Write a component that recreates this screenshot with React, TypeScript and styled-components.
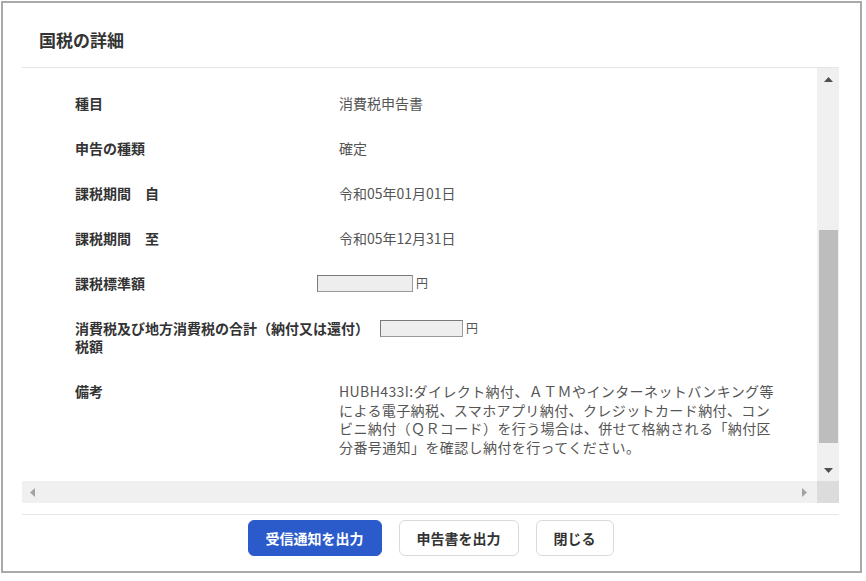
import styled, { createGlobalStyle } from "styled-components";

const GlobalStyle = createGlobalStyle`
  html, body {
    margin: 0;
    padding: 0;
    background: #ffffff;
  }
  body {
    font-family: "Noto Sans CJK JP", "Noto Sans", sans-serif;
    color: #333333;
  }
`;

const Page = styled.div`
  width: 866px;
  height: 581px;
  padding: 1px 0 0 1px;
  box-sizing: border-box;
`;

const Modal = styled.div`
  width: 861px;
  box-sizing: border-box;
  border: 2px solid #a9a9a9;
  background: #ffffff;
  display: flex;
  flex-direction: column;
`;

const Header = styled.div`
  margin: 0 21px 0 19px;
  padding: 24px 0 14px 17px;
  border-bottom: 1px solid #e6e6e6;
`;

const Title = styled.h2`
  margin: 0;
  font-size: 17px;
  line-height: 26px;
  font-weight: 700;
  color: #333333;
`;

const ScrollBox = styled.div`
  margin: 0 21px 0 19px;
  display: grid;
  grid-template-columns: 1fr 22px;
  grid-template-rows: 413px 22px;
`;

const Content = styled.div`
  overflow: hidden;
  padding-top: 13px;
`;

const Row = styled.div<{ $top?: boolean }>`
  display: flex;
  align-items: ${(p) => (p.$top ? "flex-start" : "center")};
  padding: 13px 0 14px 53px;
  font-size: 14px;
  line-height: 18px;
`;

const Label = styled.div<{ $w?: number }>`
  width: ${(p) => p.$w ?? 264}px;
  flex: none;
  font-weight: 700;
  color: #333333;
`;

const Value = styled.div`
  color: #555555;
`;

const Remark = styled.div`
  width: 440px;
  color: #555555;
  line-height: 18.7px;
  letter-spacing: 0.4px;
`;

const Amount = styled.div<{ $gap?: number }>`
  display: flex;
  align-items: center;
  margin-left: ${(p) => p.$gap ?? 0}px;
  color: #555555;
  font-size: 12px;
`;

const AmountBox = styled.div<{ $w: number }>`
  width: ${(p) => p.$w}px;
  height: 17px;
  box-sizing: border-box;
  border: 1px solid #7a7a7a;
  border-right-color: #9a9a9a;
  border-bottom-color: #9a9a9a;
  background: #eeeeee;
  margin-right: 3px;
`;

const VTrack = styled.div`
  background: #f0f0f0;
  display: flex;
  flex-direction: column;
  align-items: center;
  justify-content: space-between;
  position: relative;
`;

const VThumb = styled.div`
  position: absolute;
  left: 2px;
  right: 1px;
  top: 162px;
  height: 213px;
  background: #bdbdbd;
`;

const HTrack = styled.div`
  background: #f0f0f0;
  display: flex;
  align-items: center;
  justify-content: space-between;
  padding: 0 10px 0 8px;
`;

const Corner = styled.div`
  background: #dcdcdc;
`;

const ArrowBtn = styled.div`
  height: 22px;
  display: flex;
  align-items: center;
  justify-content: center;
`;

const Footer = styled.div`
  margin: 11px 21px 0 19px;
  padding: 5px 0 15px;
  border-top: 1px solid #e6e6e6;
  display: flex;
  justify-content: center;
  gap: 17px;
`;

const Button = styled.button<{ $primary?: boolean }>`
  height: 36px;
  padding: 0 17px;
  border-radius: 6px;
  font-family: inherit;
  font-size: 14px;
  font-weight: 700;
  cursor: pointer;
  border: 1px solid ${(p) => (p.$primary ? "#2b5bcb" : "#dadada")};
  background: ${(p) => (p.$primary ? "#2b5bcb" : "#ffffff")};
  color: ${(p) => (p.$primary ? "#ffffff" : "#333333")};
`;

const Tri = ({ dir, color }: { dir: "up" | "down" | "left" | "right"; color: string }) => {
  const pts = {
    up: "0,5 4.5,0 9,5",
    down: "0,0 9,0 4.5,5",
    left: "5,0 5,9 0,4.5",
    right: "0,0 0,9 5,4.5",
  }[dir];
  const vertical = dir === "up" || dir === "down";
  return (
    <svg width={vertical ? 9 : 5} height={vertical ? 5 : 9} viewBox={vertical ? "0 0 9 5" : "0 0 5 9"}>
      <polygon points={pts} fill={color} />
    </svg>
  );
};

export default function App() {
  return (
    <>
      <GlobalStyle />
      <Page>
        <Modal>
          <Header>
            <Title>国税の詳細</Title>
          </Header>
          <ScrollBox>
            <Content>
              <Row>
                <Label>種目</Label>
                <Value>消費税申告書</Value>
              </Row>
              <Row>
                <Label>申告の種類</Label>
                <Value>確定</Value>
              </Row>
              <Row>
                <Label>課税期間　自</Label>
                <Value>令和05年01月01日</Value>
              </Row>
              <Row>
                <Label>課税期間　至</Label>
                <Value>令和05年12月31日</Value>
              </Row>
              <Row>
                <Label $w={242}>課税標準額</Label>
                <Amount>
                  <AmountBox $w={96} />円
                </Amount>
              </Row>
              <Row $top>
                <Label $w={296}>消費税及び地方消費税の合計（納付又は還付）税額</Label>
                <Amount $gap={9}>
                  <AmountBox $w={83} />円
                </Amount>
              </Row>
              <Row $top>
                <Label>備考</Label>
                <Remark>
                  HUBH433I:ダイレクト納付、ＡＴＭやインターネットバンキング等による電子納税、スマホアプリ納付、クレジットカード納付、コンビニ納付（ＱＲコード）を行う場合は、併せて格納される「納付区分番号通知」を確認し納付を行ってください。
                </Remark>
              </Row>
            </Content>
            <VTrack>
              <ArrowBtn>
                <Tri dir="up" color="#505050" />
              </ArrowBtn>
              <VThumb />
              <ArrowBtn>
                <Tri dir="down" color="#505050" />
              </ArrowBtn>
            </VTrack>
            <HTrack>
              <Tri dir="left" color="#a3a3a3" />
              <Tri dir="right" color="#a3a3a3" />
            </HTrack>
            <Corner />
          </ScrollBox>
          <Footer>
            <Button $primary>受信通知を出力</Button>
            <Button>申告書を出力</Button>
            <Button>閉じる</Button>
          </Footer>
        </Modal>
      </Page>
    </>
  );
}
